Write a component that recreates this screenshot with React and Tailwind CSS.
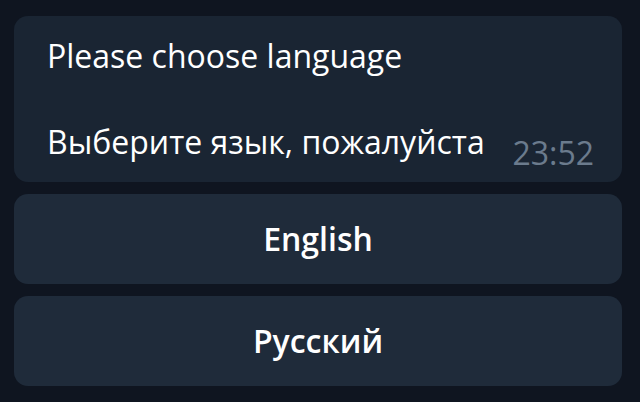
import React from 'react';

const options = ['English', 'Русский'];

const App = () => {
  return (
    <div className="w-[640px] h-[402px] bg-[#0f1520] pl-[14px] pr-[18px] pt-[16px] flex flex-col gap-[12px] font-['Open_Sans',sans-serif]">
      {/* Message bubble */}
      <div className="h-[166px] bg-[#1a2533] rounded-[14px] pl-[33px] pr-[28px] pt-[18px] flex items-end justify-between">
        <div className="self-start text-[32px] leading-[43px] text-white">
          <p>Please choose language</p>
          <p>&nbsp;</p>
          <p>Выберите язык, пожалуйста</p>
        </div>
        <span className="text-[32px] leading-none mb-[13px] text-[#6b7b8d]">23:52</span>
      </div>

      {/* Keyboard buttons */}
      {options.map(label => (
        <button
          key={label}
          type="button"
          className="h-[90px] w-full bg-[#1f2b3a] rounded-[14px] text-white text-[32px] font-semibold"
        >
          {label}
        </button>
      ))}
    </div>
  );
};

export default App;
